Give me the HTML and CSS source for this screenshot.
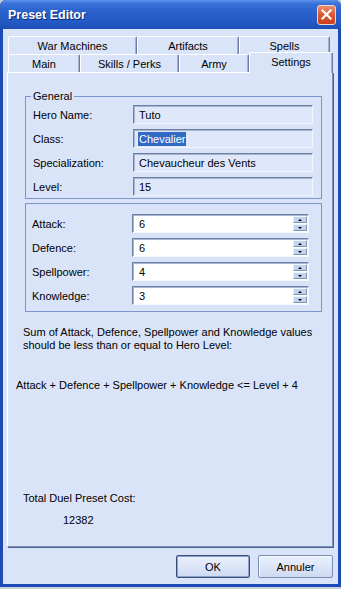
FILE: index.html
```html
<!DOCTYPE html>
<html lang="en">
<head>
    <meta charset="UTF-8">
    <meta name="viewport" content="width=device-width, initial-scale=1.0">
    <title>Preset Editor</title>
    <link rel="stylesheet" href="styles.css">
</head>
<body>
    <div class="window">
        <div class="titlebar">
            <span class="title">Preset Editor</span>
            <span class="close">
                <svg width="13" height="13" viewBox="0 0 13 13"><path d="M2.5 2.5 L10.5 10.5 M10.5 2.5 L2.5 10.5" stroke="#fff" stroke-width="2.2" stroke-linecap="square"/></svg>
            </span>
        </div>

        <div class="client">
            <div class="tabs">
                <div class="tab-row">
                    <div class="tab tab-war">War Machines</div>
                    <div class="tab tab-artifacts">Artifacts</div>
                    <div class="tab tab-spells">Spells</div>
                </div>
                <div class="tab-row">
                    <div class="tab tab-main">Main</div>
                    <div class="tab tab-skills">Skills / Perks</div>
                    <div class="tab tab-army">Army</div>
                    <div class="tab tab-settings active">Settings</div>
                </div>
            </div>

            <div class="panel">
                <fieldset class="group general">
                    <legend>General</legend>
                    <label>Hero Name:</label>
                    <div class="readonly">Tuto</div>
                    <label>Class:</label>
                    <div class="readonly"><span class="selected">Chevalier</span></div>
                    <label>Specialization:</label>
                    <div class="readonly">Chevaucheur des Vents</div>
                    <label>Level:</label>
                    <div class="readonly">15</div>
                </fieldset>

                <div class="group stats">
                    <label>Attack:</label>
                    <div class="spin"><span class="spin-value">6</span><span class="spin-arrows"><span class="arrow up"></span><span class="arrow down"></span></span></div>
                    <label>Defence:</label>
                    <div class="spin"><span class="spin-value">6</span><span class="spin-arrows"><span class="arrow up"></span><span class="arrow down"></span></span></div>
                    <label>Spellpower:</label>
                    <div class="spin"><span class="spin-value">4</span><span class="spin-arrows"><span class="arrow up"></span><span class="arrow down"></span></span></div>
                    <label>Knowledge:</label>
                    <div class="spin"><span class="spin-value">3</span><span class="spin-arrows"><span class="arrow up"></span><span class="arrow down"></span></span></div>
                </div>

                <p class="note">Sum of Attack, Defence, Spellpower and Knowledge values<br>should be less than or equal to Hero Level:</p>
                <p class="formula">Attack + Defence + Spellpower + Knowledge &lt;= Level + 4</p>
                <p class="cost-label">Total Duel Preset Cost:</p>
                <p class="cost-value">12382</p>
            </div>

            <div class="buttons">
                <button class="btn default">OK</button>
                <button class="btn">Annuler</button>
            </div>
        </div>
    </div>
</body>
</html>
```

FILE: styles.css
```css
body {
    margin: 0;
    font-family: "Liberation Sans", Arial, sans-serif;
    font-size: 11px;
    color: #000;
    background-color: #c9d0dc;
}
.window {
    width: 341px;
    height: 587px;
    display: flex;
    flex-direction: column;
    background-color: #1d4bb5;
    border-radius: 6px 6px 0 0;
    overflow: hidden;
}
.titlebar {
    height: 29px;
    flex: none;
    display: flex;
    align-items: center;
    justify-content: space-between;
    padding: 0 5px 0 8px;
    background: linear-gradient(to bottom, #5b93ea 0%, #3a72da 12%, #2a61cc 40%, #245ac4 75%, #1d4fb6 100%);
}
.title {
    color: #fff;
    font-weight: bold;
    font-size: 12.5px;
    text-shadow: 1px 1px 0 #0e2a78;
}
.close {
    width: 19px;
    height: 20px;
    box-sizing: border-box;
    display: flex;
    align-items: center;
    justify-content: center;
    border: 1px solid #f3d6cc;
    border-radius: 3px;
    background: linear-gradient(to bottom, #ec8d70 0%, #dd5a36 45%, #c8401c 100%);
}
.client {
    flex: 1;
    margin: 0 3px 3px;
    padding: 7px 5px 0 4px;
    background-color: #dae4f8;
    display: flex;
    flex-direction: column;
}
.tabs {
    margin: 0 0 -1px 1px;
}
.tab-row {
    display: flex;
    align-items: flex-start;
}
.tab {
    height: 18px;
    box-sizing: border-box;
    display: flex;
    align-items: center;
    justify-content: center;
    border-top: 1px solid #fff;
    border-left: 1px solid #fff;
    border-right: 1px solid #6a7ca4;
    box-shadow: inset -1px 0 0 #a3b1cd;
    border-radius: 2px 2px 0 0;
    background-color: #dae4f8;
    padding-top: 1px;
}
.tab-war { width: 129px; }
.tab-artifacts { width: 102px; }
.tab-spells { width: 91px; }
.tab-main { width: 72px; }
.tab-skills { width: 99px; }
.tab-army { width: 70px; }
.tab-settings { width: 84px; }
.tab.active {
    height: 21px;
    margin-top: -2px;
    padding-top: 0;
    padding-bottom: 2px;
    position: relative;
    z-index: 1;
}
.panel {
    height: 475px;
    box-sizing: border-box;
    border-top: 1px solid #fff;
    border-left: 1px solid #fff;
    border-right: 1px solid #7c8fb6;
    border-bottom: 1px solid #7c8fb6;
    box-shadow: 1px 1px 0 #4f6290;
    display: flex;
    flex-direction: column;
}
.group {
    display: grid;
    grid-template-columns: 100px 180px;
    grid-auto-rows: 19px;
    row-gap: 5px;
    align-items: center;
    border: 1px solid #7b96c8;
    min-width: 0;
}
.general {
    margin: 17px 10px 0 17px;
    padding: 2px 6px 2px 7px;
}
.general legend {
    padding: 0 2px;
    margin-left: -2px;
    line-height: 13px;
}
.stats {
    grid-template-columns: 100px 177px;
    margin: 4px 10px 0 17px;
    padding: 10px 0 6px 6px;
}
.readonly {
    height: 19px;
    box-sizing: border-box;
    display: flex;
    align-items: center;
    padding-left: 5px;
    border-top: 1px solid #6d7fa6;
    border-left: 1px solid #6d7fa6;
    border-right: 1px solid #f4f7fd;
    border-bottom: 1px solid #f4f7fd;
    box-shadow: inset 1px 1px 0 #a7b5d0;
    background-color: #dfe8fa;
}
.selected {
    background-color: #316ac5;
    color: #fff;
    line-height: 14px;
    margin-left: -1px;
    padding: 0 1px;
}
.spin {
    height: 19px;
    box-sizing: border-box;
    display: flex;
    align-items: center;
    justify-content: space-between;
    padding: 0 1px 0 6px;
    border-top: 1px solid #6d7fa6;
    border-left: 1px solid #6d7fa6;
    border-right: 1px solid #f4f7fd;
    border-bottom: 1px solid #f4f7fd;
    box-shadow: inset 1px 1px 0 #a7b5d0;
    background-color: #fff;
}
.spin-arrows {
    display: flex;
    flex-direction: column;
    gap: 1px;
}
.arrow {
    width: 14px;
    height: 7px;
    box-sizing: border-box;
    display: flex;
    align-items: center;
    justify-content: center;
    background-color: #c4d3ef;
    border-top: 1px solid #f1f5fd;
    border-left: 1px solid #f1f5fd;
    border-right: 1px solid #7f92b8;
    border-bottom: 1px solid #7f92b8;
}
.arrow::after {
    content: "";
    border-left: 2px solid transparent;
    border-right: 2px solid transparent;
}
.arrow.up::after {
    border-bottom: 2px solid #000;
}
.arrow.down::after {
    border-top: 2px solid #000;
}
.note, .formula, .cost-label, .cost-value {
    margin: 0;
    line-height: 13px;
}
.note {
    margin: 14px 0 0 15px;
}
.formula {
    margin: 27px 0 0 8px;
}
.cost-label {
    margin: 100px 0 0 15px;
}
.cost-value {
    margin: 9px 0 0 55px;
}
.buttons {
    display: flex;
    justify-content: flex-end;
    gap: 8px;
    margin-top: 8px;
}
.btn {
    height: 23px;
    font-family: inherit;
    font-size: 11px;
    color: #000;
    background: linear-gradient(to bottom, #eaf0fc 0%, #dae4f8 60%, #cdd9f2 100%);
    border: 1px solid #7a8db5;
    box-shadow: inset 1px 1px 0 #f7f9fe;
    border-radius: 2px;
    padding: 0;
}
.btn.default {
    width: 74px;
    border-color: #3b4f7c;
    box-shadow: inset 0 0 0 1px #8ea2c8;
}
.btn:not(.default) {
    width: 75px;
}
```
